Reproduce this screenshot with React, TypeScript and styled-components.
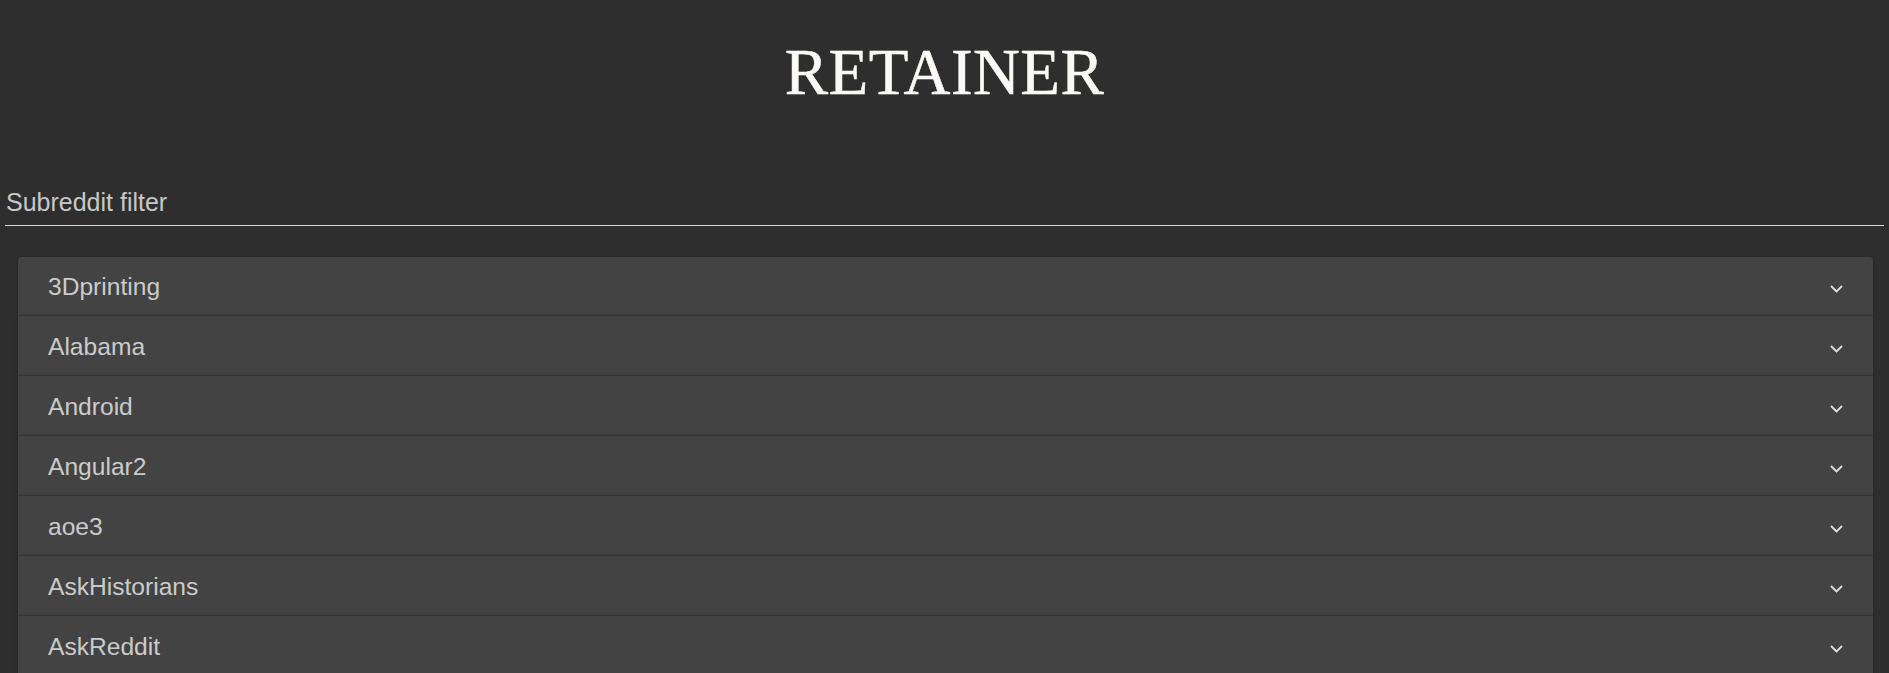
import React from "react";
import styled, { createGlobalStyle } from "styled-components";

const GlobalStyle = createGlobalStyle`
  html, body {
    margin: 0;
    padding: 0;
    background: #2e2e2e;
  }
  body {
    font-family: "Liberation Sans", Arial, sans-serif;
    overflow: hidden;
  }
`;

const Page = styled.div`
  display: flex;
  flex-direction: column;
  height: 673px;
  overflow: hidden;
  background: #2e2e2e;
`;

const Title = styled.h1`
  margin: 40px 0 0;
  text-align: center;
  font-family: "Liberation Serif", "Times New Roman", serif;
  font-weight: 400;
  font-size: 65px;
  line-height: 65px;
  color: #fbfaf6;
  letter-spacing: 0.4px;
  -webkit-text-stroke: 0.5px #fbfaf6;
`;

const FilterWrap = styled.div`
  margin: 77px 5px 0;
  display: flex;
  flex-direction: column;
`;

const FilterInput = styled.input`
  border: none;
  border-bottom: 1px solid #d8d8d8;
  background: transparent;
  outline: none;
  box-sizing: content-box;
  padding: 2px 0 5px 1px;
  height: 36px;
  font-family: "Liberation Sans", Arial, sans-serif;
  font-size: 25px;
  color: #d0d0d0;
  &::placeholder {
    color: #c8c8c8;
    opacity: 1;
  }
`;

const List = styled.div`
  margin: 31px 16px 0 18px;
  display: flex;
  flex-direction: column;
`;

const Row = styled.div<{ $first?: boolean }>`
  box-sizing: border-box;
  display: flex;
  align-items: center;
  justify-content: space-between;
  padding: 0 30px;
  background: #434343;
  border-top: ${(p) => (p.$first ? "none" : "1px solid #363636")};
  border-radius: ${(p) => (p.$first ? "4px 4px 0 0" : "0")};
  box-shadow: 0 1px 3px rgba(0, 0, 0, 0.35);
  height: ${(p) => (p.$first ? "58px" : "60px")};
  flex-shrink: 0;
`;

const RowLabel = styled.span`
  font-size: 24.6px;
  color: #cbcbcb;
  padding-top: 2px;
`;

const Chevron = styled.svg`
  width: 13px;
  height: 8px;
  margin-top: 6px;
  flex-shrink: 0;
`;

const subs = [
  "3Dprinting",
  "Alabama",
  "Android",
  "Angular2",
  "aoe3",
  "AskHistorians",
  "AskReddit",
];

export default function App() {
  return (
    <Page>
      <GlobalStyle />
      <Title>RETAINER</Title>
      <FilterWrap>
        <FilterInput placeholder="Subreddit filter" />
      </FilterWrap>
      <List>
        {subs.map((s, i) => (
          <Row key={s} $first={i === 0}>
            <RowLabel>{s}</RowLabel>
            <Chevron viewBox="0 0 13 8">
              <polyline
                points="1,1 6.5,6.5 12,1"
                fill="none"
                stroke="#e0e0e0"
                strokeWidth="1.8"
              />
            </Chevron>
          </Row>
        ))}
      </List>
    </Page>
  );
}
